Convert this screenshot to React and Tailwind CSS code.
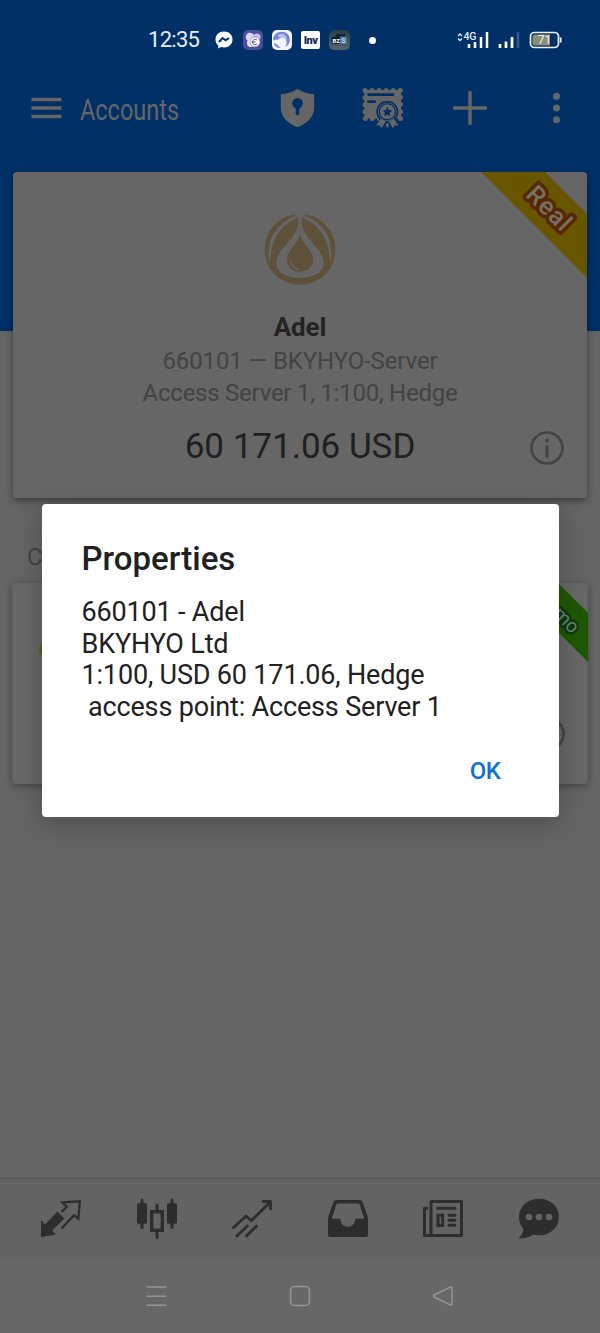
import { clsx } from 'clsx'

function StatusBar() {
  return (
    <div className="flex h-[80px] items-center pl-[148px] pr-[38px]">
      <span className="w-[52px] whitespace-nowrap text-[22px] leading-none tracking-[-0.7px] text-[#e9edf3]">12:35</span>

      {/* Notification icons */}
      <div className="ml-[15px] flex items-center gap-[9px]">
        <svg width="18" height="18" viewBox="0 0 18 18">
          <path d="M9 .5C4 .5.5 4 .5 8.500c0 2.500 1 4.500 2.700 6V17.500l2.700-1.400c1 .3 2 .4 3.100.4 5 0 8.500-3.500 8.500-8S14 .5 9 .5Z" fill="#fff" />
          <path d="M4 11l3.600-4 3 2.300L14 7" fill="none" stroke="#003066" strokeWidth="2" />
        </svg>
        <svg className="ml-[1px]" width="20" height="20" viewBox="0 0 20 20">
          <rect width="20" height="20" rx="5" fill="#4d4d9c" />
          <circle cx="7" cy="7" r="4.300" fill="#d8d8f0" />
          <circle cx="14" cy="7" r="3.500" fill="#c3c3e6" />
          <circle cx="8" cy="13" r="4" fill="#e9e9f8" />
          <circle cx="12" cy="12" r="5" fill="#fff" stroke="#6868aa" strokeWidth=".6" />
          <path d="M14 10c-2.500-1.500-4.500 0-4.500 2s2 3.500 4.500 2M8.700 12h4" fill="none" stroke="#4d4d8c" />
        </svg>
        <svg width="20" height="20" viewBox="0 0 20 20">
          <rect width="20" height="20" rx="5" fill="#f2f4ff" />
          <path d="M2 6C5 1 14 0 17 6c2 5 0 9-4 11 2-3 2-5 1-7-2-4-6-3-8 0-2-1-3 0-4 1-1-2-1-3 0-5Z" fill="#7484cf" />
          <path d="M6 4.500c5-2 9 1 9 6-3-4-7-4-9-3" fill="#b5c0f2" />
          <path d="M2 13c3 0 4 3 7 5H6c-2-1-4-2-4-5Z" fill="#8997da" />
        </svg>
        <span className="flex h-[18px] w-[19px] items-center justify-center rounded-[2px] bg-white text-[11px] font-black leading-none tracking-[-0.5px] text-[#102c55]">Inv</span>
        <svg width="21" height="20" viewBox="0 0 21 20">
          <defs>
            <linearGradient id="tile" x1="0" y1="0" x2="0" y2="1">
              <stop stopColor="#263d4b" />
              <stop offset="1" stopColor="#57656d" />
            </linearGradient>
          </defs>
          <rect width="21" height="20" rx="5" fill="url(#tile)" />
          <path d="M7 5.500h9" stroke="#0c1827" strokeWidth="2" />
          <rect x="2.500" y="6.500" width="9" height="7.500" rx="3" fill="#101b2a" />
          <rect x="11" y="6.500" width="7" height="7.500" rx="1" fill="#43799d" />
          <text x="3.500" y="12.500" fontSize="6" fontWeight="bold" fill="#fff">BZ</text>
          <text x="12.300" y="13" fontSize="7" fontWeight="bold" fill="#b9def5">S</text>
        </svg>
      </div>
      <span className="ml-[19px] h-[7px] w-[7px] rounded-full bg-white" />

      {/* Signal and battery */}
      <div className="ml-auto flex items-center gap-[9px]">
        <svg width="32" height="18" viewBox="0 0 32 18">
          <path d="M1 5l2-2 2 2M1 7.500l2 2 2-2" fill="none" stroke="#e8edf2" strokeWidth="1.300" />
          <text x="6.500" y="9" fontSize="10.500" fontWeight="500" letterSpacing="-.3" fill="#e8edf2">4G</text>
          <path d="M12 13v4M18 11v6M24 6v11M30 1v16" stroke="#fff" strokeWidth="2.500" />
        </svg>
        <svg width="22" height="18" viewBox="0 0 22 18">
          <path d="M2 13v4M8 10.500V17M14 6v11" stroke="#fff" strokeWidth="2.700" />
          <path d="M20 1v16" stroke="#315b8a" strokeWidth="2.500" />
        </svg>
        <svg width="33" height="18" viewBox="0 0 33 18">
          <rect x="1.500" y="1.500" width="28" height="15" rx="4" fill="none" stroke="#eef1f4" strokeWidth="1.700" />
          <path d="M6 3.500h15v11H6A2.500 2.500 0 0 1 3.500 12V6A2.500 2.500 0 0 1 6 3.500Z" fill="#8b8d79" />
          <path d="M31.700 6.500v5" stroke="#eef1f4" strokeWidth="1.700" />
          <text x="15.500" y="13.300" textAnchor="middle" fontSize="12" fill="#f2f2ee">71</text>
        </svg>
      </div>
    </div>
  )
}

function CertificateIcon() {
  return (
    <svg width="42" height="42" viewBox="0 0 42 42">
      <rect x="2.500" y="3" width="36.500" height="28.500" fill="#666" />
      <path d="M3 3.500h35.500v28H3Z" fill="none" stroke="#666" strokeWidth="5" strokeLinecap="round" strokeDasharray="0 7.050" />
      <path d="M6.500 7.700H31M6.500 14.700h6.300" stroke="#003066" strokeWidth="2.700" strokeLinecap="round" />
      <path d="M17 30h17v6H17Z" fill="#003066" />
      <circle cx="25.300" cy="24.700" r="11" fill="#003066" />
      <path d="M18.500 32l-4.500 6.500 4-.3 1.500 3 4.500-7.200ZM32 32l4.500 6.500-4-.3-1.500 3-4.500-7.200Z" fill="#666" />
      <path d="M25.300 35.500l-2 2.800 2 2.700 2-2.700Z" fill="#666" />
      <circle cx="25.300" cy="24.700" r="9.300" fill="#666" />
      <circle cx="25.300" cy="24.700" r="8" fill="none" stroke="#003066" strokeWidth="1.200" />
      <path d="M25.300 19.700l1.500 3.300 3.500.4-2.600 2.400.7 3.500-3.100-1.700-3.100 1.700.7-3.500-2.600-2.400 3.500-.4Z" fill="#003066" />
    </svg>
  )
}

function Toolbar() {
  return (
    <div className="flex h-[56px] items-center pl-[31px] pr-[39px]">
      <svg width="31" height="22" viewBox="0 0 31 22">
        <path d="M.5 2.500h30M.5 11h30M.5 19.500h30" stroke="#666" strokeWidth="3.400" />
      </svg>
      <h1 className="ml-[18px] mt-[4px] w-[99px] origin-left scale-x-[0.81] whitespace-nowrap text-[29px] leading-none text-[#666]">Accounts</h1>
      <svg className="ml-auto" width="35" height="40" viewBox="0 0 35 40">
        <path d="M17.500.8C12 4.500 6.500 6 .8 6.300v13C1 29 8 36 17.500 39.300 27 36 34 29 34.200 19.300v-13C28.500 6 23 4.500 17.500.8Z" fill="#666" />
        <circle cx="17.500" cy="15.300" r="5.300" fill="#003066" />
        <path d="M17.500 16v9.500" stroke="#003066" strokeWidth="3.600" strokeLinecap="round" />
      </svg>
      <div className="ml-[47px] mr-[1px] flex">
        <CertificateIcon />
      </div>
      <svg className="ml-[48px]" width="34" height="34" viewBox="0 0 34 34">
        <path d="M17 1.500v31M1.500 17h31" stroke="#666" strokeWidth="3.400" strokeLinecap="round" />
      </svg>
      <svg className="ml-[65px]" width="9" height="32" viewBox="0 0 9 32">
        <circle cx="4.500" cy="4.300" r="3.500" fill="#666" />
        <circle cx="4.500" cy="16" r="3.500" fill="#666" />
        <circle cx="4.500" cy="27.700" r="3.500" fill="#666" />
      </svg>
    </div>
  )
}

function BrokerLogo() {
  return (
    <svg width="72" height="72" viewBox="0 0 72 72">
      <circle cx="36" cy="36.300" r="35.500" fill="#5e5039" />
      <path d="M28 0h16l-6.500 4.500h-3Z" fill="#666" />
      <path d="M34.500 2h3.500c-.3 8 0 14 5 21 6 9 16.500 16 16.500 27C59.500 60 48 65 36 65S12.500 60 12.500 50C12.500 39 23 32 29 23c5-7 5.500-13 5.500-21Z" fill="#666" />
      <path d="M34 2.500C14 9 2.500 25 5.500 48 7 27 16 11.500 34 4ZM38.500 2.500C58.500 9 69.500 25 66.500 48 65 27 56 11.500 38.500 4Z" fill="#666" stroke="#666" strokeWidth=".8" />
      <path d="M36 21.500c2 9 13.300 16 13.300 25.500 0 7-5.800 11.700-13.300 11.700S23 54 23 47c0-9.500 11-16.500 13-25.500Z" fill="#5e5039" />
      <path d="M27 48c.5 4.500 3.500 7.500 8 8.500" fill="none" stroke="#666" strokeWidth="1.600" strokeLinecap="round" />
    </svg>
  )
}

function InfoIcon({ className }) {
  return (
    <svg className={clsx('absolute', className)} width="34" height="34" viewBox="0 0 34 34" fill="none" stroke="#434343">
      <circle cx="17" cy="17" r="15.500" strokeWidth="2.600" />
      <path d="M17 15.500v10.500" strokeWidth="3" strokeLinecap="round" />
      <circle cx="17" cy="9.500" r="1.900" fill="#434343" stroke="none" />
    </svg>
  )
}

function AccountCard() {
  return (
    <section className="relative z-10 mx-[13px] -mt-[159px] flex h-[326px] flex-col items-center rounded-[4px] bg-[#666] pt-[41px] shadow-[0_3px_7px_rgba(0,0,0,0.4)]">
      <BrokerLogo />
      <h2 className="mt-[26px] text-[26px] font-bold leading-[32px] tracking-[-0.1px] text-[#232323]">Adel</h2>
      <p className="mt-[2px] text-[24px] leading-[32px] tracking-[-0.12px] text-[#434343]">660101 — BKYHYO-Server</p>
      <p className="text-[24px] leading-[32px] tracking-[-0.25px] text-[#434343]">Access Server 1, 1:100, Hedge</p>
      <p className="mt-[18px] text-[35px] leading-[40px] text-[#202020]">60 171.06 USD</p>
      <InfoIcon className="bottom-[33px] right-[23px]" />
      <svg className="absolute right-0 top-0 rounded-tr-[4px]" width="107" height="107" viewBox="0 0 107 107">
        <path d="M1 0h64l42 42v64Z" fill="#685500" />
        <text
          transform="translate(69.500 36.500) rotate(45)"
          textAnchor="middle"
          dominantBaseline="central"
          fontSize="25"
          fontWeight="500"
          letterSpacing="1"
          fill="#777069"
          stroke="#572800"
          strokeWidth="7"
          strokeLinejoin="round"
          paintOrder="stroke"
        >
          Real
        </text>
      </svg>
    </section>
  )
}

function DemoCard() {
  return (
    <section className="relative mx-[12px] mt-[10px] h-[201px] rounded-[4px] bg-[#666] shadow-[0_2px_7px_rgba(0,0,0,0.35)]">
      <svg className="absolute left-[26px] top-[55px]" width="10" height="20" viewBox="0 0 10 20">
        <path d="M6 1C2 3 4 7 2 10c-2 4 0 7 5 8" fill="#4d5a25" stroke="#64602a" strokeWidth="1.500" />
      </svg>
      <InfoIcon className="bottom-[33px] right-[23px]" />
      <svg className="absolute right-0 top-0" width="80" height="80" viewBox="0 0 80 80">
        <path d="M1 0h49l30 30v49Z" fill="#1e5700" />
        <text
          transform="translate(50.500 29) rotate(45)"
          textAnchor="middle"
          dominantBaseline="central"
          fontSize="19"
          fill="#738073"
          stroke="#0c3b0e"
          strokeWidth="5"
          strokeLinejoin="round"
          paintOrder="stroke"
        >
          Demo
        </text>
      </svg>
    </section>
  )
}

function TabBar() {
  return (
    <nav className="flex h-[81px] items-center justify-between border-t border-[#575757] bg-[#636363] px-[41px] text-[#2d2d2d]">
      {/* Quotes */}
      <svg width="40" height="42" viewBox="0 0 40 42">
        <path d="M0 22l4 4.500 12.500-13 7 7L11 32.500l4 4L0 39Z" fill="currentColor" />
        <path d="M20.500 14l5.300-5.300-4.500-4.200 17.500-1.300-1.500 17.500-4.300-3.500L20.500 30.500" fill="none" stroke="currentColor" strokeWidth="2.300" />
      </svg>
      {/* Charts */}
      <svg width="40" height="42" viewBox="0 0 40 42">
        <rect x="0" y="5.300" width="10" height="20.400" rx="1.200" fill="currentColor" />
        <rect x="30" y="5.300" width="10" height="20.400" rx="1.200" fill="currentColor" />
        <rect x="14.700" y="13.700" width="10.600" height="18.600" fill="none" stroke="currentColor" strokeWidth="3.400" />
        <path d="M5 2v27.500M35 2v27.500M20 7v6M20 33v6.500" stroke="currentColor" strokeWidth="3" strokeLinecap="round" />
      </svg>
      {/* Trade */}
      <svg width="40" height="42" viewBox="0 0 40 42" fill="none" stroke="currentColor" strokeWidth="2.800" strokeLinecap="round" strokeLinejoin="round">
        <path d="M1.500 29.500L14 18l5.300 4.700 19-18.700M31 3.500h7.500V11M15.300 28L4.800 38M24.500 28L14.500 38" />
      </svg>
      {/* History */}
      <svg width="40" height="42" viewBox="0 0 40 42">
        <path
          fillRule="evenodd"
          d="M8.500 2h23c1.500 0 2.500.7 3 2l5 14c.3.700.5 1.700.5 2.500V37c0 1.300-.7 2-2 2H2c-1.300 0-2-.7-2-2V20.500c0-.8.200-1.800.5-2.500l5-14c.5-1.300 1.500-2 3-2ZM10 5.500c-1 0-1.500.3-1.800 1.200L3.700 20.700h8.600c.3 5 3.200 8 7.500 8s7.200-3 7.500-8h9L31.800 6.700c-.3-.9-.8-1.200-1.800-1.200Z"
          fill="currentColor"
        />
      </svg>
      {/* News */}
      <svg width="40" height="42" viewBox="0 0 40 42" fill="none" stroke="currentColor" strokeWidth="3">
        <path d="M8 3.500h30.500v34H8ZM5 10.300H1.500v27.200H8" strokeLinejoin="round" />
        <path d="M14.500 10.300h17.500M26 17.300h6M26 22.300h6M26 27.300h6" strokeLinecap="round" strokeWidth="2.900" />
        <rect x="15" y="17.200" width="4.600" height="10.300" />
      </svg>
      {/* Messages */}
      <svg width="40" height="42" viewBox="0 0 40 42">
        <path d="M20 .7c11.500 0 20 8 20 18.300s-8.500 18.300-20 18.300c-2 0-4-.3-5.500-.7-4 2.600-9 4-13.500 4-1 0-1-.8-.5-1.300 2.500-2.500 3.700-5.300 4-8.300C1.700 28 0 23.700 0 19 0 8.700 8.500.7 20 .7Z" fill="currentColor" />
        <circle cx="10" cy="19" r="3.300" fill="#636363" />
        <circle cx="20" cy="19" r="3.300" fill="#636363" />
        <circle cx="30" cy="19" r="3.300" fill="#636363" />
      </svg>
    </nav>
  )
}

function SystemNav() {
  return (
    <div className="flex h-[74px] items-center justify-between bg-[#676767] px-[145px]">
      <svg width="22" height="22" viewBox="0 0 22 22">
        <path d="M1.500 2h20M1.500 11.200h20M1.500 20.300h20" stroke="#959595" strokeWidth="1.600" />
      </svg>
      <svg width="22" height="22" viewBox="0 0 22 22">
        <rect x="1.500" y="1.500" width="19" height="19" rx="4" fill="none" stroke="#959595" strokeWidth="1.500" />
      </svg>
      <svg width="22" height="22" viewBox="0 0 22 22">
        <path d="M17.500 1.800L1.300 10c-.9.500-.9 1.500 0 2l16.200 8.200c.8.400 1.500 0 1.500-1V2.800c0-1-.7-1.400-1.500-1Z" fill="none" stroke="#959595" strokeWidth="1.500" />
      </svg>
    </div>
  )
}

function PropertiesDialog() {
  return (
    <div className="absolute inset-0 z-20 flex items-center justify-center pb-[12px]">
      <div
        role="dialog"
        className="flex h-[313px] w-[517px] flex-col rounded-[4px] bg-white px-[40px] pt-[35px] text-[#212121] shadow-[0_6px_24px_rgba(0,0,0,0.22)]"
      >
        <h2 className="text-[33px] font-medium leading-[40px]">Properties</h2>
        <div className="mt-[18px] whitespace-pre text-[27px] leading-[31.700px] tracking-[-0.170px]">
          <p>660101 - Adel</p>
          <p>BKYHYO Ltd</p>
          <p>1:100, USD 60 171.06, Hedge</p>
          <p> access point: Access Server 1</p>
        </div>
        <button className="mr-[18px] mt-[31px] self-end text-[24px] font-medium leading-[32px] tracking-[-0.5px] text-[#1371cf]">OK</button>
      </div>
    </div>
  )
}

export default function App() {
  return (
    <div className="relative flex h-[1333px] w-[600px] flex-col overflow-hidden bg-[#646464] font-['Roboto',sans-serif]">
      <header className="h-[331px] flex-shrink-0 bg-[#003066]">
        <StatusBar />
        <Toolbar />
      </header>
      <main className="flex-1">
        <AccountCard />
        <p className="ml-[27px] mt-[43px] text-[24px] leading-[32px] text-[#434343]">C</p>
        <DemoCard />
      </main>
      <TabBar />
      <SystemNav />
      <PropertiesDialog />
    </div>
  )
}
